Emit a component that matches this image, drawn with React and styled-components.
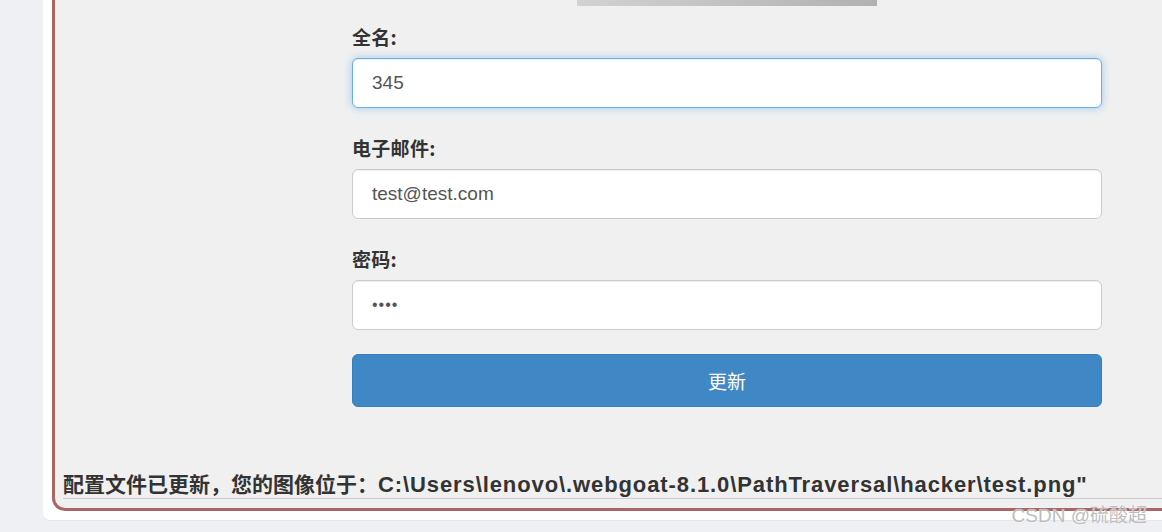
import styled, { createGlobalStyle } from "styled-components"

const GlobalStyle = createGlobalStyle`
  html, body {
    margin: 0;
    padding: 0;
    background: #eff0f4;
    overflow: hidden;
  }
  body {
    font-family: "Liberation Sans", "Noto Sans CJK SC", Arial, sans-serif;
  }
`

const fields = [
  { label: "全名:", value: "345", type: "text", focused: true },
  { label: "电子邮件:", value: "test@test.com", type: "text" },
  { label: "密码:", value: "1234", type: "password" },
]

function App() {
  return (
    <Page>
      <GlobalStyle />
      <Card>
        <Panel>
          <FormColumn>
            <Picture />
            <Form onSubmit={(e) => e.preventDefault()}>
              {fields.map((field) => (
                <Group key={field.label}>
                  <Label>{field.label}</Label>
                  <Input
                    type={field.type}
                    defaultValue={field.value}
                    $focused={field.focused}
                    readOnly
                  />
                </Group>
              ))}
              <Button type="submit">更新</Button>
            </Form>
          </FormColumn>
          <Message>
            配置文件已更新，您的图像位于：
            <Path>C:\Users\lenovo\.webgoat-8.1.0\PathTraversal\hacker\test.png"</Path>
          </Message>
        </Panel>
      </Card>
      <Watermark>CSDN @硫酸超</Watermark>
    </Page>
  )
}

const Page = styled.div`
  position: relative;
  height: 532px;
  width: 1162px;
  padding-left: 43px;
  box-sizing: border-box;
  overflow: hidden;
`

const Card = styled.div`
  width: 1200px;
  background: #ffffff;
  padding: 0 9px 9px 9px;
  border-radius: 0 0 0 7px;
  box-shadow: 0 1px 1px rgba(0, 0, 0, 0.04);
`

const Panel = styled.div`
  background: #f0f0f0;
  border: 3px solid #aa6565;
  border-top: none;
  border-right: none;
  border-radius: 0 0 0 13px;
  padding: 0 0 9px 8px;
`

const FormColumn = styled.div`
  width: 750px;
  margin-left: 289px;
  display: flex;
  flex-direction: column;
  align-items: center;
`

const Picture = styled.div`
  width: 300px;
  height: 6px;
  background: linear-gradient(90deg, #d2d2d2, #b1b1b1);
`

const Form = styled.form`
  align-self: stretch;
  margin-top: 17px;
  display: flex;
  flex-direction: column;
`

const Group = styled.div`
  margin-bottom: 26px;
  &:last-of-type {
    margin-bottom: 24px;
  }
`

const Label = styled.label`
  display: block;
  font-family: "Noto Sans CJK SC", "Liberation Sans", sans-serif;
  font-weight: 700;
  font-size: 19px;
  line-height: 27px;
  letter-spacing: 0.3px;
  color: #333333;
  margin-bottom: 8px;
`

const Input = styled.input`
  display: block;
  box-sizing: border-box;
  width: 100%;
  height: 50px;
  padding: 0 19px;
  font-family: "Liberation Sans", Arial, sans-serif;
  font-size: 19px;
  color: #555555;
  background: #ffffff;
  border: 1px solid ${({ $focused }) => ($focused ? "#66afe9" : "#cccccc")};
  border-radius: 6px;
  outline: none;
  box-shadow: ${({ $focused }) =>
    $focused
      ? "inset 0 1px 1px rgba(0,0,0,.075), 0 0 8px rgba(102,175,233,.6)"
      : "inset 0 1px 1px rgba(0,0,0,.075)"};
  &[type="password"] {
    font-size: 16px;
    letter-spacing: 1px;
  }
`

const Button = styled.button`
  height: 53px;
  width: 100%;
  background: #3f87c5;
  border: 1px solid #357ebd;
  border-radius: 6px;
  color: #ffffff;
  font-family: "Noto Sans CJK SC", "Liberation Sans", sans-serif;
  font-size: 19px;
  cursor: pointer;
`

const Message = styled.div`
  margin-top: 63px;
  border-bottom: 1px solid #cccccc;
  font-family: "Noto Sans CJK SC", "Liberation Sans", sans-serif;
  font-weight: 700;
  font-size: 21px;
  line-height: 27px;
  color: #333333;
  white-space: nowrap;
`

const Path = styled.span`
  font-family: "Liberation Sans", Arial, sans-serif;
  font-size: 22px;
  letter-spacing: 0.9px;
`

const Watermark = styled.div`
  position: absolute;
  right: 15px;
  bottom: 5px;
  font-family: "Liberation Sans", "Noto Sans CJK SC", sans-serif;
  font-size: 19px;
  color: #bdbdbd;
  text-shadow: 0 0 1px #ffffff;
`

export default App
